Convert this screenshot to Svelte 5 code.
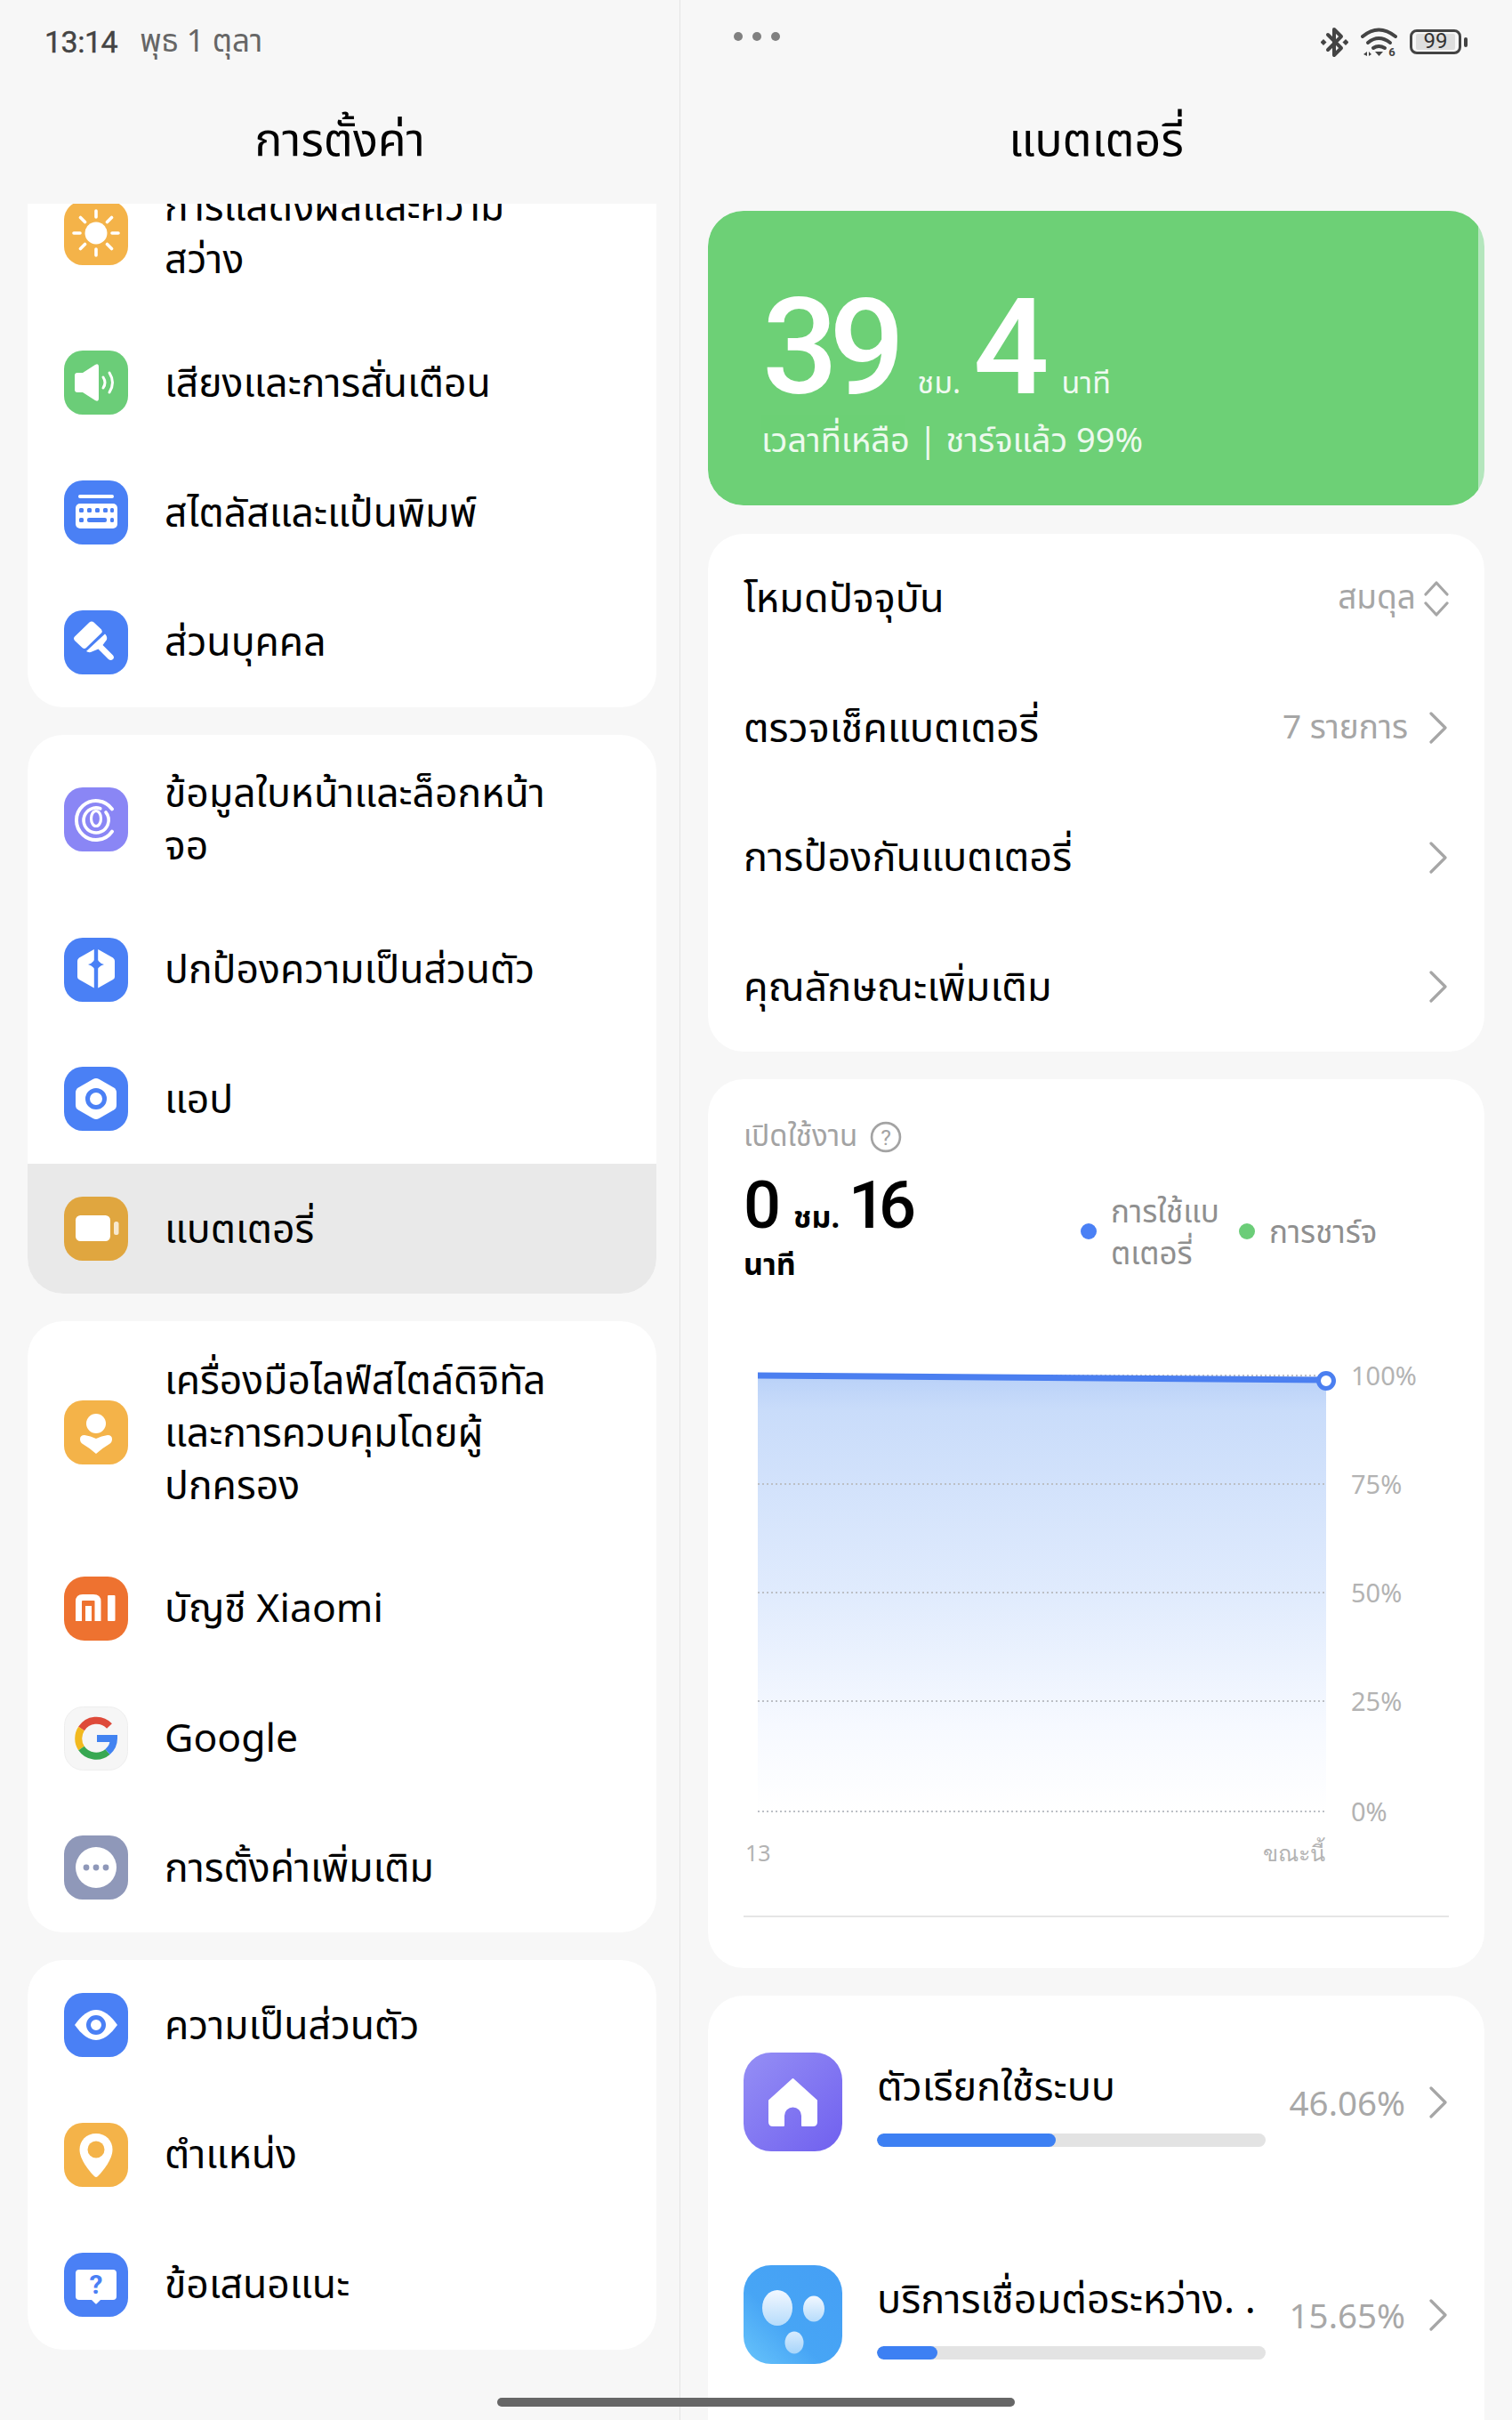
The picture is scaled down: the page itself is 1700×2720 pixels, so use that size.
<script>
  const groupOne = [
    { icon: "sun", label: "การแสดงผลและความ\nสว่าง", tall: true },
    { icon: "sound", label: "เสียงและการสั่นเตือน" },
    { icon: "keyboard", label: "สไตลัสและแป้นพิมพ์" },
    { icon: "brush", label: "ส่วนบุคคล" }
  ];
  const groupTwo = [
    { icon: "face", label: "ข้อมูลใบหน้าและล็อกหน้า\nจอ", tall: true },
    { icon: "shield", label: "ปกป้องความเป็นส่วนตัว" },
    { icon: "apps", label: "แอป" },
    { icon: "battery", label: "แบตเตอรี่", active: true }
  ];
  const groupThree = [
    { icon: "wellbeing", label: "เครื่องมือไลฟ์สไตล์ดิจิทัล\nและการควบคุมโดยผู้\nปกครอง", tall: true },
    { icon: "mi", label: "บัญชี Xiaomi" },
    { icon: "google", label: "Google" },
    { icon: "more", label: "การตั้งค่าเพิ่มเติม" }
  ];
  const groupFour = [
    { icon: "eye", label: "ความเป็นส่วนตัว" },
    { icon: "pin", label: "ตำแหน่ง" },
    { icon: "tips", label: "ข้อเสนอแนะ" }
  ];
  const groups = [groupOne, groupTwo, groupThree, groupFour];

  const batteryRows = [
    { label: "โหมดปัจจุบัน", value: "สมดุล", updown: true },
    { label: "ตรวจเช็คแบตเตอรี่", value: "7 รายการ" },
    { label: "การป้องกันแบตเตอรี่" },
    { label: "คุณลักษณะเพิ่มเติม" }
  ];

  const gridLines = [
    { y: 17, label: "100%" },
    { y: 139, label: "75%" },
    { y: 261, label: "50%" },
    { y: 383, label: "25%" },
    { y: 507, label: "0%" }
  ];

  const usage = [
    { name: "ตัวเรียกใช้ระบบ", pct: 46.06, icon: "home" },
    { name: "บริการเชื่อมต่อระหว่าง. .", pct: 15.65, icon: "link" }
  ];
</script>

{#snippet chevron()}
  <svg class="chev" viewBox="0 0 24 36" width="24" height="36">
    <path d="M4 2 L20 18 L4 34" fill="none" stroke="#a6a6a6" stroke-width="3.2" stroke-linecap="round" stroke-linejoin="round" />
  </svg>
{/snippet}

{#snippet rowIcon(name)}
  <svg class="icon" viewBox="0 0 72 72" width="72" height="72">
    {#if name === "sun"}
      <rect width="72" height="72" rx="21" fill="#f4b349" />
      <circle cx="36" cy="36" r="12.5" fill="#fff" />
      <g stroke="#fff" stroke-width="3.6" stroke-linecap="round">
        <path d="M36 11v7M36 54v7M11 36h7M54 36h7M18.5 18.5l5 5M48.5 48.5l5 5M18.5 53.5l5-5M48.5 23.5l5-5" />
      </g>
    {:else if name === "sound"}
      <rect width="72" height="72" rx="21" fill="#6bcd78" />
      <path d="M15 25 Q12 25 12 28 V44 Q12 47 15 47 H21 L35 56 Q39 58 39 54 V18 Q39 14 35 16 L21 25Z" fill="#fff" />
      <path d="M44 30 Q48 36 44 42M51 25 Q58 36 51 47" fill="none" stroke="#fff" stroke-width="3" stroke-linecap="round" />
    {:else if name === "keyboard"}
      <rect width="72" height="72" rx="21" fill="#4a80f5" />
      <rect x="16" y="16" width="40" height="4" rx="2" fill="#fff" />
      <rect x="13" y="26" width="47" height="28" rx="5" fill="#fff" />
      <g fill="#4a80f5">
        <rect x="17" y="31" width="5" height="5" rx="1.5" /><rect x="26" y="31" width="5" height="5" rx="1.5" /><rect x="35" y="31" width="5" height="5" rx="1.5" /><rect x="44" y="31" width="5" height="5" rx="1.5" /><rect x="52" y="31" width="4" height="5" rx="1.5" />
        <rect x="17" y="42" width="5" height="5" rx="1.5" /><rect x="26" y="42" width="22" height="5" rx="2" /><rect x="52" y="42" width="4" height="5" rx="1.5" />
      </g>
    {:else if name === "brush"}
      <rect width="72" height="72" rx="21" fill="#4a80f5" />
      <path d="M12 29.5 L28.5 13.5 Q31 11.5 33.5 13.5 L42 21.5 Q43.5 23.5 42 25.5 L25 42 Q23 44 20.5 42 L12 34 Q10 31.5 12 29.5Z" fill="#fff" />
      <path d="M46 26.5 Q49 29.5 48 33 L43.5 39 L55 50.5 Q57 53 55 55 Q52.5 57 50 55 L38.5 43.5 L30 47 Q27 47.5 25 46Z" fill="#fff" />
    {:else if name === "face"}
      <rect width="72" height="72" rx="21" fill="#8a86f5" />
      <g fill="none" stroke="#fff" stroke-linecap="round">
        <path d="M54 24.4 A22 22 0 1 0 54 49.6" stroke-width="4" />
        <path d="M40.8 23.8 A14 14 0 1 0 49.2 41.8 A14 14 0 0 0 47 28" stroke-width="3.6" />
        <ellipse cx="36" cy="35" rx="5.5" ry="8.5" stroke-width="3.2" />
      </g>
    {:else if name === "shield"}
      <rect width="72" height="72" rx="21" fill="#4a80f5" />
      <path d="M33.8 13 L17 22.5 Q15 24 15 26 V44 Q15 46 17 47 L33.8 56.5Z" fill="#fff" />
      <path d="M38.2 13 L55 22.5 Q57 24 57 26 V44 Q57 46 55 47 L38.2 56.5Z" fill="#fff" />
      <path d="M36 19 Q37 28 45 30 Q37 32 36 41 Q35 32 27 30 Q35 28 36 19Z" fill="#4a80f5" />
    {:else if name === "apps"}
      <rect width="72" height="72" rx="21" fill="#4a80f5" />
      <path d="M32.5 14 Q36 12 39.5 14 L56 23.5 Q59 25.5 59 29 V43 Q59 46.5 56 48.5 L39.5 58 Q36 60 32.5 58 L16 48.5 Q13 46.5 13 43 V29 Q13 25.5 16 23.5Z" fill="#fff" />
      <circle cx="36" cy="36" r="9.5" fill="none" stroke="#4a80f5" stroke-width="5" />
    {:else if name === "battery"}
      <rect width="72" height="72" rx="21" fill="#e0a63f" />
      <rect x="13" y="21" width="39" height="29" rx="5.5" fill="#fff" />
      <rect x="56" y="28" width="5.5" height="15" rx="2.5" fill="#fff" opacity=".75" />
    {:else if name === "wellbeing"}
      <rect width="72" height="72" rx="21" fill="#f4b349" />
      <circle cx="36" cy="26" r="11" fill="#fff" />
      <path d="M36 60 Q28 53 21 49 Q18 47 18 43.5 Q18 39 23 39 Q30 40 36 43 Q42 40 49 39 Q54 39 54 43.5 Q54 47 51 49 Q44 53 36 60Z" fill="#fff" />
    {:else if name === "mi"}
      <rect width="72" height="72" rx="23" fill="#ee7230" />
      <path d="M16.5 50 V28 Q16.5 23.5 21 23.5 H33 Q38 23.5 38 28 V50" fill="none" stroke="#fff" stroke-width="7" />
      <path d="M27.5 33 V50" fill="none" stroke="#fff" stroke-width="7" />
      <rect x="49" y="21" width="8.5" height="29" rx="1" fill="#fff" />
    {:else if name === "google"}
      <rect x=".5" y=".5" width="71" height="71" rx="21" fill="#f6f6f6" stroke="#eeeeee" />
      <g fill="none" stroke-width="8">
        <path d="M51 22 A20 20 0 0 0 19.5 25" stroke="#de4a3a" />
        <path d="M19.5 25 A20 20 0 0 0 19.5 47" stroke="#f2b91f" />
        <path d="M19.5 47 A20 20 0 0 0 49 51" stroke="#38a852" />
        <path d="M49 51 A20 20 0 0 0 56 36 H37" stroke="#4283f1" />
      </g>
    {:else if name === "more"}
      <rect width="72" height="72" rx="21" fill="#8f98b9" />
      <circle cx="36" cy="36" r="23" fill="#fff" />
      <circle cx="25" cy="36" r="3.4" fill="#8f98b9" /><circle cx="36" cy="36" r="3.4" fill="#8f98b9" /><circle cx="47" cy="36" r="3.4" fill="#8f98b9" />
    {:else if name === "eye"}
      <rect width="72" height="72" rx="21" fill="#4a80f5" />
      <path d="M12 36 Q24 19 36 19 Q48 19 60 36 Q48 53 36 53 Q24 53 12 36Z" fill="#fff" />
      <circle cx="36" cy="36" r="8.5" fill="none" stroke="#4a80f5" stroke-width="5" />
    {:else if name === "pin"}
      <rect width="72" height="72" rx="21" fill="#f4b349" />
      <path d="M36 12 C47 12 54.5 20 54.5 30 C54.5 41 44 54 38 60 Q36 62 34 60 C28 54 17.5 41 17.5 30 C17.5 20 25 12 36 12Z" fill="#fff" />
      <circle cx="36" cy="30" r="9.5" fill="#f4b349" />
    {:else if name === "tips"}
      <rect width="72" height="72" rx="21" fill="#4a80f5" />
      <path d="M17 19 H55 Q59 19 59 23 V49 Q59 53 55 53 H41 L37 57 Q36 58 35 57 L31 53 H17 Q13 53 13 49 V23 Q13 19 17 19Z" fill="#fff" />
      <text class="tip-q" x="36" y="46" text-anchor="middle">?</text>
    {/if}
  </svg>
{/snippet}

<div class="screen">
  <aside class="left">
    <div class="status">
      <span class="time">13:14</span>
      <span class="date">พุธ 1 ตุลา</span>
    </div>
    <h1 class="title">การตั้งค่า</h1>
    <div class="scroller">
      {#each groups as group, g}
        <div class="card" class:first={g === 0}>
          {#each group as item}
            <div class="row" class:tall={item.tall} class:active={item.active}>
              {@render rowIcon(item.icon)}
              <span class="label">{item.label}</span>
            </div>
          {/each}
        </div>
      {/each}
    </div>
  </aside>

  <main class="right">
    <div class="status status-right">
      <div class="dots"><i></i><i></i><i></i></div>
      <div class="sys">
        <svg viewBox="0 0 31 35" width="31" height="35">
          <path d="M8 9 L23 24 L15 32 V3 L23 11 L8 26" fill="none" stroke="#444" stroke-width="4" stroke-linejoin="round" stroke-linecap="round" />
          <rect x="0.5" y="15" width="5" height="5" transform="rotate(45 3 17.5)" fill="#444" />
          <rect x="25.5" y="15" width="5" height="5" transform="rotate(45 28 17.5)" fill="#444" />
        </svg>
        <svg viewBox="0 0 41 32" width="41" height="32">
          <g fill="none" stroke="#444" stroke-width="4" stroke-linecap="round">
            <path d="M2 10 Q20 -5 39 10" />
            <path d="M8 17 Q20 7 33 17" />
            <path d="M14 23 Q20 19 27 23" />
          </g>
          <path d="M16 27 H25 L20.5 32Z" fill="#444" />
          <text class="wifi-six" x="35" y="32" text-anchor="middle">6</text>
          <path d="M3 30 L7 27 V32ZM9 27 L12 30 L9 32Z" fill="#444" />
        </svg>
        <div class="batt"><span>99</span></div>
        <i class="nub"></i>
      </div>
    </div>
    <h1 class="title">แบตเตอรี่</h1>

    <div class="pane">
      <section class="hero">
        <div class="hero-fill">
          <div class="hero-time">
            <span class="num">39</span><span class="unit">ชม.</span><span class="num four">4</span><span class="unit">นาที</span>
          </div>
          <div class="hero-sub">เวลาที่เหลือ | ชาร์จแล้ว 99%</div>
        </div>
      </section>

      <section class="card">
        {#each batteryRows as row}
          <div class="row-plain">
            <span class="row-label">{row.label}</span>
            {#if row.value}<span class="row-value" class:tight={row.updown}>{row.value}</span>{/if}
            {#if row.updown}
              <svg class="chev" viewBox="0 0 28 42" width="28" height="42">
                <path d="M2 16 L14 3 L26 16M2 26 L14 39 L26 26" fill="none" stroke="#a6a6a6" stroke-width="3.2" stroke-linecap="round" stroke-linejoin="round" />
              </svg>
            {:else}
              {@render chevron()}
            {/if}
          </div>
        {/each}
      </section>

      <section class="card chart-card">
        <div class="on-title">
          เปิดใช้งาน
          <svg viewBox="0 0 35 35" width="36" height="36">
            <circle cx="17.5" cy="17.5" r="15.5" fill="none" stroke="#a3a3a3" stroke-width="2.6" />
            <text class="q" x="17.5" y="26" text-anchor="middle">?</text>
          </svg>
        </div>
        <div class="stat-head">
          <div class="stat">
            <span class="big">0</span><span class="stat-unit">ชม.</span><span class="big narrow">16</span>
            <div class="stat-min">นาที</div>
          </div>
          <div class="legend">
            <div class="legend-item"><i class="dot blue"></i><span>การใช้แบ<br />ตเตอรี่</span></div>
            <div class="legend-item"><i class="dot green"></i><span>การชาร์จ</span></div>
          </div>
        </div>

        <svg class="chart" viewBox="0 0 793 580" width="793" height="580">
          <defs>
            <linearGradient id="fade" x1="0" y1="0" x2="0" y2="1">
              <stop offset="0" stop-color="#b9d1f8" />
              <stop offset=".08" stop-color="#c9dcfa" />
              <stop offset=".5" stop-color="#e0ebfd" />
              <stop offset=".8" stop-color="#f6f9ff" />
              <stop offset="1" stop-color="#ffffff" />
            </linearGradient>
          </defs>
          <path d="M16 17 L655 22 V507 H16Z" fill="url(#fade)" />
          {#each gridLines as line}
            <line x1="16" x2="655" y1={line.y} y2={line.y} stroke="#bcbfc5" stroke-width="2" stroke-dasharray="2 3" />
            <text class="axis" x="683" y={line.y + 11}>{line.label}</text>
          {/each}
          <path d="M16 17 L655 22" stroke="#4b7ff0" stroke-width="7" />
          <circle cx="655" cy="23" r="8.5" fill="#fff" stroke="#4b7ff0" stroke-width="5" />
          <text class="axis small" x="2" y="563">13</text>
          <text class="axis small" x="654" y="563" text-anchor="end">ขณะนี้</text>
        </svg>
        <div class="rule"></div>
      </section>

      <section class="card usage-card">
        {#each usage as app}
          <div class="usage-row">
            <svg class="app-icon" viewBox="0 0 111 111" width="111" height="111">
              <defs>
                <linearGradient id="grad-home" x1="0" y1="0" x2="1" y2="1">
                  <stop offset="0" stop-color="#958ff5" /><stop offset="1" stop-color="#7060ef" />
                </linearGradient>
                <linearGradient id="grad-link" x1="1" y1="0" x2="0" y2="1">
                  <stop offset="0" stop-color="#459ff5" /><stop offset=".6" stop-color="#47a5f5" /><stop offset="1" stop-color="#68c4fb" />
                </linearGradient>
                <linearGradient id="grad-ball" x1="0" y1="0" x2="0" y2="1">
                  <stop offset="0" stop-color="#f2f8ff" /><stop offset="1" stop-color="#b6dcfb" />
                </linearGradient>
              </defs>
              {#if app.icon === "home"}
                <rect width="111" height="111" rx="31" fill="url(#grad-home)" />
                <path d="M55.5 30 L82 54 V78 Q82 82 78 82 H66 V71 A10.5 10.5 0 0 0 45 71 V82 H33 Q29 82 29 78 V54Z" fill="#fff" stroke="#fff" stroke-width="2" stroke-linejoin="round" />
              {:else}
                <rect width="111" height="111" rx="31" fill="url(#grad-link)" />
                <ellipse cx="38" cy="48" rx="17" ry="20" fill="url(#grad-ball)" />
                <ellipse cx="79" cy="49" rx="12" ry="14.5" fill="url(#grad-ball)" />
                <ellipse cx="57" cy="87" rx="10.5" ry="12.5" fill="url(#grad-ball)" opacity=".85" />
              {/if}
            </svg>
            <div class="usage-mid">
              <div class="usage-name">{app.name}</div>
              <div class="track"><div class="fill" style="width: {app.pct}%"></div></div>
            </div>
            <span class="usage-pct">{app.pct.toFixed(2)}%</span>
            {@render chevron()}
          </div>
        {/each}
      </section>
    </div>
  </main>

  <div class="home-bar"></div>
</div>

<style>
  :global(body) { background: #f7f7f7; }
  .screen {
    position: relative; display: flex; width: 1700px; height: 2720px;
    overflow: hidden; background: #f7f7f7; color: #000;
    font-family: "Noto Sans", "Noto Sans Thai", Roboto, sans-serif;
  }
  .left { width: 764px; border-right: 1px solid #e4e4e4; display: flex; flex-direction: column; flex-shrink: 0; }
  .right { flex: 1; min-width: 0; display: flex; flex-direction: column; }

  .status { height: 94px; display: flex; align-items: center; gap: 25px; padding: 0 50px; box-sizing: border-box; flex-shrink: 0; }
  .status-right { justify-content: space-between; padding: 0 50px 0 60px; }
  .time { font-size: 34px; color: #444; font-family: Roboto, sans-serif; letter-spacing: -.5px; -webkit-text-stroke: .4px #444; }
  .date { font-size: 35px; color: #666; }
  .title { margin: 0; height: 135px; flex-shrink: 0; display: flex; align-items: center; justify-content: center; font-size: 52px; font-weight: 400; padding-bottom: 6px; box-sizing: border-box; }

  .dots { display: flex; gap: 11px; margin-top: -12px; }
  .dots i { width: 10px; height: 10px; border-radius: 50%; background: #808080; }
  .sys { display: flex; align-items: center; }
  .sys svg { margin-right: 14px; }
  .batt { width: 58px; height: 28px; box-sizing: border-box; border: 3.5px solid #444; border-radius: 8px; padding: 2px 4px; }
  .batt span { display: block; height: 100%; background: #dedede; border-radius: 2px; font: 24px/17px Roboto, sans-serif; color: #333; text-align: center; }
  .nub { width: 4px; height: 11px; margin-left: 3px; background: #444; border-radius: 2px; }
  .wifi-six { font: 700 13px Roboto, sans-serif; fill: #444; }

  .scroller { flex: 1; min-height: 0; overflow: hidden; padding: 0 26px 0 31px; }
  .card { background: #fff; border-radius: 40px; overflow: hidden; margin-bottom: 31px; }
  .card.first { margin-top: -62.5px; }
  .row { display: flex; align-items: center; height: 145.75px; padding: 0 41px; gap: 41px; box-sizing: border-box; }
  .row.tall { height: auto; padding-top: 36.5px; padding-bottom: 36.5px; }
  .row.active { background: #e9e9e9; }
  .label { font-size: 44.5px; line-height: 59px; white-space: pre-line; margin: -2px 0 2px; }
  .icon { flex-shrink: 0; }
  .tip-q { font: 700 30px Roboto, sans-serif; fill: #4a80f5; }

  .pane { flex: 1; min-height: 0; overflow: hidden; padding: 8px 31px 0; }
  .hero { height: 331px; background: #b4e6bd; border-radius: 40px; overflow: hidden; margin-bottom: 32px; }
  .hero-fill { width: 99.2%; height: 100%; background: #6dd076; border-radius: 40px 16px 16px 40px; color: #fff; padding: 93px 0 0 61px; box-sizing: border-box; }
  .hero-time { display: flex; align-items: baseline; height: 122px; }
  .num { font: 500 150px/122px Roboto, sans-serif; letter-spacing: -10px; }
  .four { margin-left: 14px; }
  .unit { font-size: 34px; margin-left: 24px; opacity: .9; }
  .hero-sub { font-size: 38px; margin-top: 15px; margin-left: -1px; opacity: .88; }

  .row-plain { display: flex; align-items: center; height: 145.5px; padding: 0 40px; }
  .row-label { font-size: 45px; margin-right: auto; margin-top: 3px; }
  .row-value { font-size: 37px; color: #a6a6a6; margin-right: 22px; }
  .row-value.tight { margin-right: 9px; }
  .chev { flex-shrink: 0; }

  .chart-card { padding: 40px 40px 0; height: 999px; box-sizing: border-box; margin-top: 0; }
  .on-title { display: flex; align-items: center; gap: 14px; font-size: 33px; color: #a3a3a3; height: 50px; }
  .q { font: 24px Roboto, sans-serif; fill: #a3a3a3; }
  .stat-head { display: flex; align-items: center; height: 140px; margin-top: 8px; }
  .stat { width: 379px; flex-shrink: 0; margin-top: -3px; }
  .big { font: 500 74px/80px Roboto, sans-serif; }
  .narrow { letter-spacing: -8px; }
  .stat-unit { font-size: 34px; font-weight: 700; margin: 0 10px 0 14px; }
  .stat-min { font-size: 34px; font-weight: 700; line-height: 50px; }
  .legend { display: flex; align-items: center; gap: 22px; font-size: 35px; line-height: 47px; color: #8f8f8f; margin-top: 5px; }
  .legend-item { display: flex; align-items: center; gap: 16px; }
  .dot { width: 18px; height: 18px; border-radius: 50%; flex-shrink: 0; }
  .blue { background: #4a80f5; }
  .green { background: #6bcd78; }

  .chart { display: block; margin-top: 78px; }
  .axis { font: 29px "Noto Sans", Roboto, sans-serif; fill: #b3b3b3; }
  .axis.small { font-size: 25px; }
  .rule { height: 2px; background: #e5e5e5; margin-top: 44px; }

  .usage-card { padding: 0 40px; height: 700px; margin: 0; }
  .usage-row { display: flex; align-items: center; height: 239px; padding-top: 0; }
  .app-icon { flex-shrink: 0; margin-right: 39px; }
  .usage-mid { width: 437px; display: flex; flex-direction: column; gap: 24px; }
  .usage-name { font-size: 45px; line-height: 60px; white-space: nowrap; margin-top: 2px; }
  .track { height: 15px; border-radius: 8px; background: #e3e3e3; overflow: hidden; }
  .fill { height: 100%; background: #3d80f3; border-radius: 8px; }
  .usage-pct { font-size: 38.5px; color: #a8a8a8; margin-left: auto; margin-right: 25px; }

  .home-bar { position: absolute; left: 559px; top: 2695px; width: 582px; height: 10px; border-radius: 5px; background: #666; }
</style>
